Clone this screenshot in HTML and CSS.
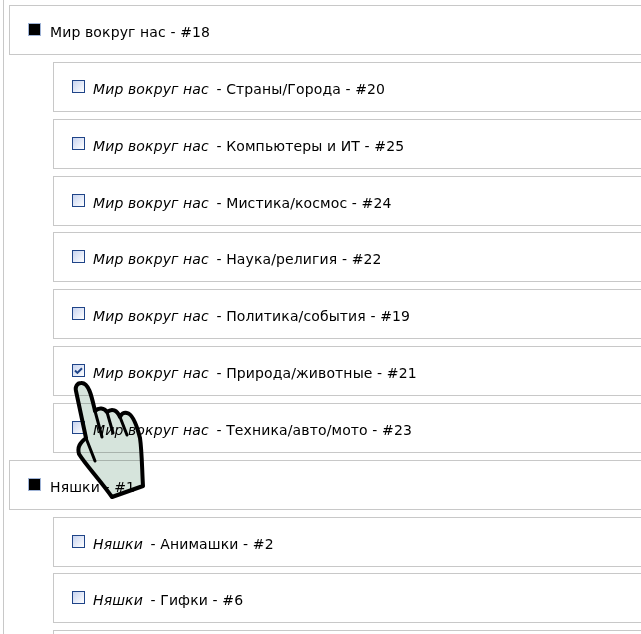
FILE: index.html
```html
<!DOCTYPE html>
<html lang="ru">
<head>
<meta charset="utf-8">
<title>Рубрики</title>
<link rel="stylesheet" href="styles.css">
</head>
<body>
<div class="tree">
  <div class="row"><span class="box filled"></span><span class="label">Мир вокруг нас - #18</span></div>
  <div class="row sub"><span class="box"></span><span class="label"><em>Мир вокруг нас</em> - Страны/Города - #20</span></div>
  <div class="row sub"><span class="box"></span><span class="label"><em>Мир вокруг нас</em> - Компьютеры и ИТ - #25</span></div>
  <div class="row sub"><span class="box"></span><span class="label"><em>Мир вокруг нас</em> - Мистика/космос - #24</span></div>
  <div class="row sub"><span class="box"></span><span class="label"><em>Мир вокруг нас</em> - Наука/религия - #22</span></div>
  <div class="row sub"><span class="box"></span><span class="label"><em>Мир вокруг нас</em> - Политика/события - #19</span></div>
  <div class="row sub"><span class="box checked"><svg viewBox="0 0 13 13" class="tick"><path d="M3 6.5l2.4 2.4L10 4.2"/></svg></span><span class="label"><em>Мир вокруг нас</em> - Природа/животные - #21</span></div>
  <div class="row sub"><span class="box"></span><span class="label"><em>Мир вокруг нас</em> - Техника/авто/мото - #23</span></div>
  <div class="row"><span class="box filled"></span><span class="label">Няшки - #1</span></div>
  <div class="row sub"><span class="box"></span><span class="label"><em>Няшки</em> - Анимашки - #2</span></div>
  <div class="row sub"><span class="box"></span><span class="label"><em>Няшки</em> - Гифки - #6</span></div>
  <div class="row sub"></div>
</div>
<svg class="hand" viewBox="70 378 80 125" width="80" height="125">
  <path class="skin" d="M81 383C77 383 75 387 76 391L86 438C80 443 77 447 79 454C85 464 100 480 112 497L143 486C142 470 142 452 140 438C137 426 133 414 127 413C124 412 121 414 120 417C117 410 112 408 107 412C104 408 99 407 95 411C92 398 89 382 81 383Z"/>
  <path class="line" d="M86 438L95 461M95 411L102 437M107 412L113 433M120 417L127 435"/>
</svg>
</body>
</html>
```
FILE: styles.css
```css
html, body { margin: 0; padding: 0; background: #fff; overflow: hidden; height: 634px; }
body { font-family: "DejaVu Sans", Verdana, sans-serif; font-size: 14px; letter-spacing: 0.12px; line-height: 20px; color: #000; position: relative; }
.tree { margin: 0 -10px 0 3px; padding: 5.17px 0 0 5px; border-left: 1px solid #c8c8c8; display: flex; flex-direction: column; }
.row { box-sizing: border-box; height: 50px; border: 1px solid #c8c8c8; border-right: 0; background: #fff; display: flex; align-items: flex-start; flex: none; margin-bottom: 6.83px; padding: 17px 0 0 18px; }
.row.sub { margin-left: 44px; }
.box { box-sizing: border-box; width: 13px; height: 13px; margin-right: 9px; border: 1px solid #1f4488; background: linear-gradient(135deg, #c8d4f0, #fff); flex: none; position: relative; }
.row.sub .box { margin-right: 8px; }
.box.filled { background: #000; border-color: #9fb3d6; }
.label { margin-top: -1px; }
.tick { position: absolute; left: -1px; top: -1px; width: 13px; height: 13px; fill: none; stroke: #1f4488; stroke-width: 2; }
em { font-style: italic; margin-right: 3px; }
.hand { position: absolute; left: 70px; top: 378px; mix-blend-mode: multiply; }
.skin { fill: #d6e4dc; stroke: #000; stroke-width: 4; stroke-linejoin: round; }
.line { fill: none; stroke: #000; stroke-width: 3; stroke-linecap: round; }
```
